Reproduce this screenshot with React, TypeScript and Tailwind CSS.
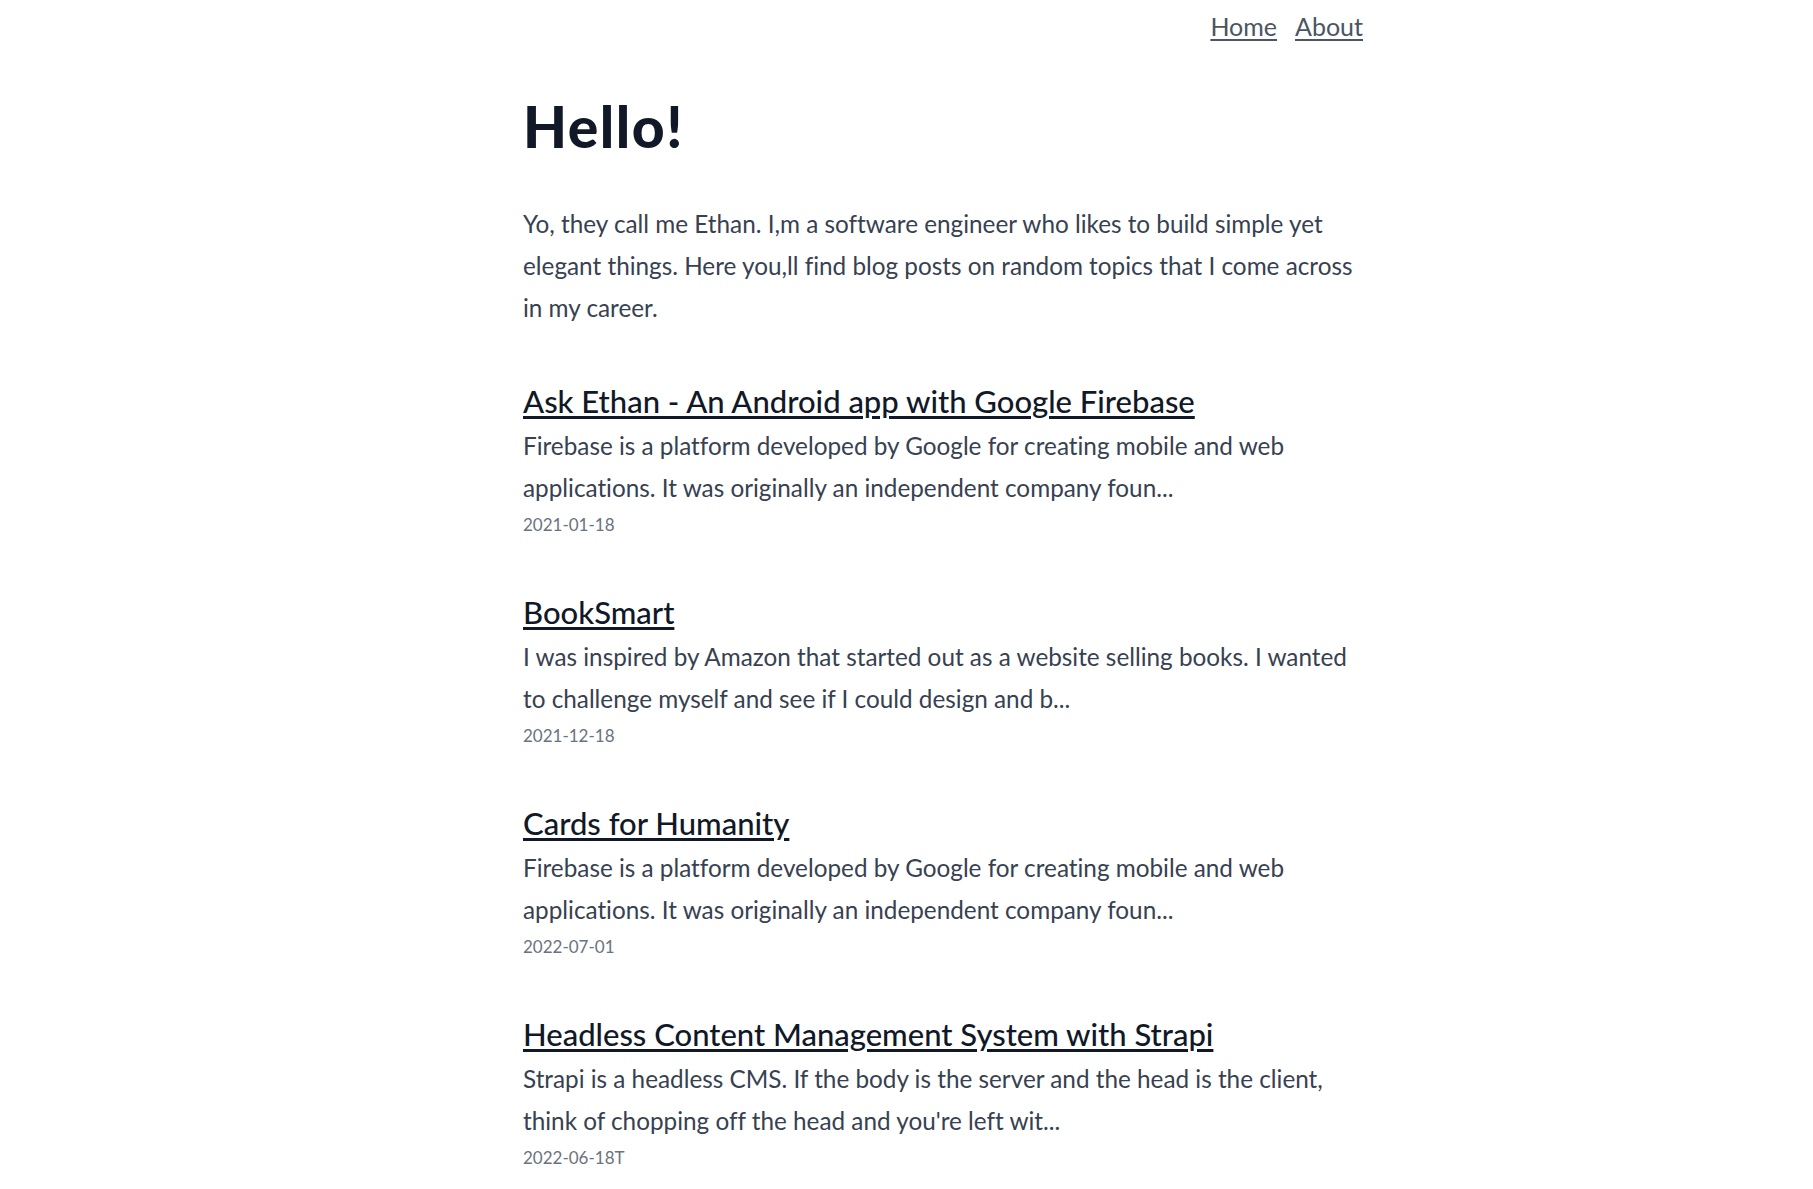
import React from "react";

type Post = {
  title: string;
  excerpt: string;
  date: string;
};

const posts: Post[] = [
  {
    title: "Ask Ethan - An Android app with Google Firebase",
    excerpt:
      "Firebase is a platform developed by Google for creating mobile and web applications. It was originally an independent company foun...",
    date: "2021-01-18",
  },
  {
    title: "BookSmart",
    excerpt:
      "I was inspired by Amazon that started out as a website selling books. I wanted to challenge myself and see if I could design and b...",
    date: "2021-12-18",
  },
  {
    title: "Cards for Humanity",
    excerpt:
      "Firebase is a platform developed by Google for creating mobile and web applications. It was originally an independent company foun...",
    date: "2022-07-01",
  },
  {
    title: "Headless Content Management System with Strapi",
    excerpt:
      "Strapi is a headless CMS. If the body is the server and the head is the client, think of chopping off the head and you're left wit...",
    date: "2022-06-18T",
  },
];

const App: React.FC = () => {
  return (
    <div className="min-h-screen bg-white pl-[73px] font-['Lato','Noto_Sans',sans-serif] [font-variant-ligatures:none]">
      <div className="mx-auto w-[840px]">
        {/* nav */}
        <nav className="flex justify-end gap-[18px] pt-[8px] text-[25px] leading-[36px] text-[#4b5563]">
          <a href="/" className="underline decoration-2 underline-offset-[3px]">
            Home
          </a>
          <a href="/about" className="underline decoration-2 underline-offset-[3px]">
            About
          </a>
        </nav>

        {/* intro */}
        <h1 className="mt-[52px] text-[57px] font-black leading-[60px] tracking-[1.5px] text-[#111827]">
          Hello!
        </h1>
        <p className="mt-[47px] text-[24.3px] leading-[42px] text-[#374151]">
          Yo, they call me Ethan. I,m a software engineer who likes to build simple yet
          elegant things. Here you,ll find blog posts on random topics that I come across
          in my career.
        </p>

        {/* posts */}
        <ul className="mt-[52px]">
          {posts.map((post) => (
            <li key={post.title} className="mb-[55px]">
              <a
                href="/"
                className="text-[31px] font-medium leading-[40px] text-[#111827] underline decoration-[3px] underline-offset-[3px]">
                {post.title}
              </a>
              <p className="mt-[4px] text-[24.3px] leading-[42px] text-[#374151]">
                {post.excerpt}
              </p>
              <p className="mt-[4px] text-[17px] leading-[24px] text-[#6b7280]">{post.date}</p>
            </li>
          ))}
        </ul>
      </div>
    </div>
  );
};

export default App;
